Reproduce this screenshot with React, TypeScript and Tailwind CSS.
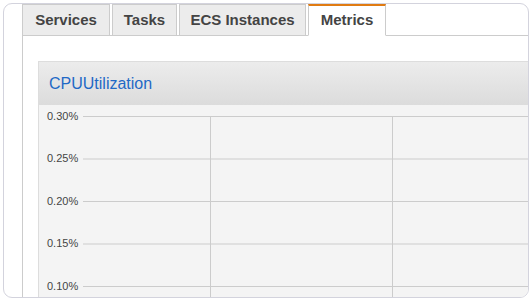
export default function App() {
  const tabs = [
    { label: "Services", w: "w-[88px]" },
    { label: "Tasks", w: "w-[65px]" },
    { label: "ECS Instances", w: "w-[127px]" },
  ];

  const ticks = ["0.30%", "0.25%", "0.20%", "0.15%", "0.10%"];

  return (
    <div className="h-[300px] w-[530px] bg-white pl-[3px] pt-[3px] font-['Liberation_Sans',Arial,sans-serif]">
      {/* FRAME */}
      <div className="h-[295px] w-[526px] overflow-hidden rounded-[9px] border border-[#d3d3dd] bg-white pl-[18px]">
        <div className="flex h-full flex-col">
          {/* TABS */}
          <div className="flex h-[32px] shrink-0 gap-[2px] border-b border-[#cccccc]">
            {tabs.map((t) => (
              <div
                key={t.label}
                className={`${t.w} -mb-px flex h-[32px] items-center justify-center border border-[#cccccc] bg-[#ececec] text-[15px] font-bold text-[#444444]`}
              >
                {t.label}
              </div>
            ))}
            <div className="-mb-px flex h-[32px] w-[78px] items-center justify-center border border-t-2 border-[#cccccc] border-t-[#e07b12] border-b-white bg-white text-[15px] font-bold text-[#444444]">
              Metrics
            </div>
          </div>

          {/* CONTENT */}
          <div className="flex-1 border-l border-[#cccccc] pl-[15px] pt-[25px]">
            <div className="w-[520px] border-l border-t border-[#dddddd]">
              {/* HEADER */}
              <div className="flex h-[43px] items-center bg-linear-to-b from-[#ececec] to-[#dcdcdc] pl-[10px] text-[16px] text-[#1f69c6]">
                CPUUtilization
              </div>

              {/* CHART */}
              <div className="flex h-[200px] bg-[#f4f4f4]">
                <div className="flex w-[44px] shrink-0 flex-col gap-[29.5px] pl-[8px] pt-[4.5px] text-[11px] leading-[13px] text-[#444444]">
                  {ticks.map((t) => (
                    <div key={t} className="h-[13px]">
                      {t}
                    </div>
                  ))}
                </div>
                <div className="flex-1">
                  <svg width="476" height="200" className="block">
                    {[0, 1, 2, 3, 4].map((i) => (
                      <line
                        key={i}
                        x1="0"
                        x2="476"
                        y1={11.5 + i * 42.5}
                        y2={11.5 + i * 42.5}
                        stroke="#cccccc"
                        strokeWidth="1"
                      />
                    ))}
                    <line x1="127.5" x2="127.5" y1="11" y2="200" stroke="#cccccc" />
                    <line x1="309.5" x2="309.5" y1="11" y2="200" stroke="#cccccc" />
                  </svg>
                </div>
              </div>
            </div>
          </div>
        </div>
      </div>
    </div>
  );
}
